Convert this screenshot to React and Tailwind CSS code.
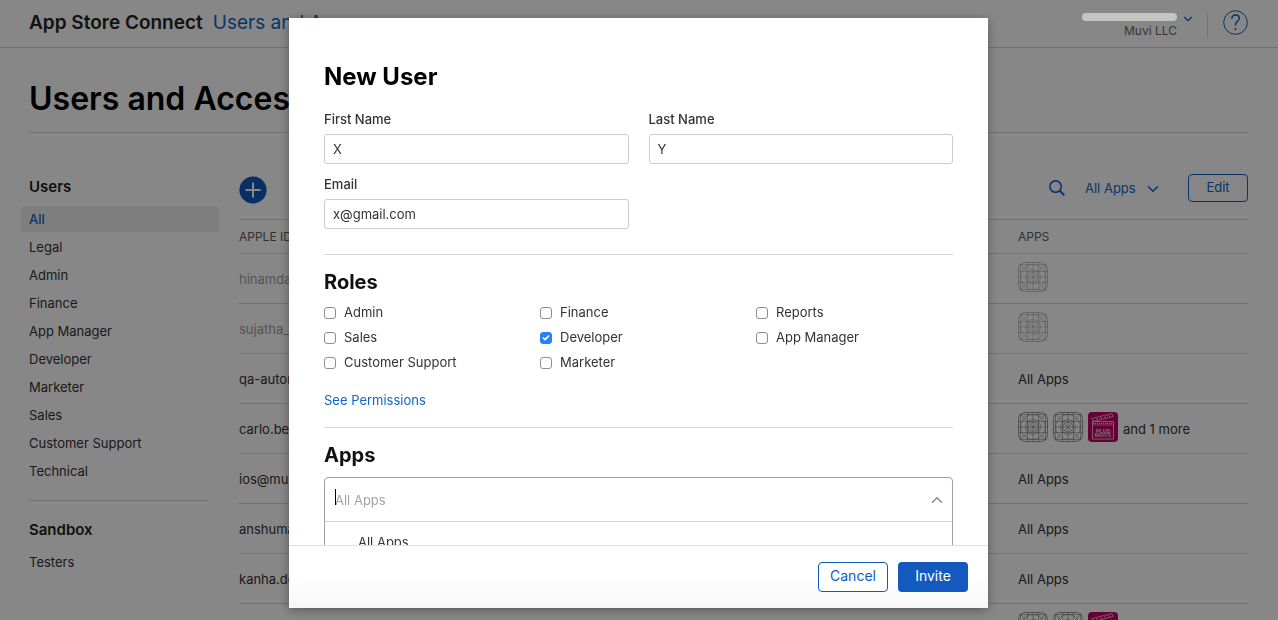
import React from 'react';
import { ChevronDown, ChevronUp, Check } from 'lucide-react';

const sidebarRoles = ['All', 'Legal', 'Admin', 'Finance', 'App Manager', 'Developer', 'Marketer', 'Sales', 'Customer Support', 'Technical'];

const users = [
    { id: 'hinamda', pending: true, icons: ['grid'] },
    { id: 'sujatha_4', pending: true, icons: ['grid'] },
    { id: 'qa-autom', apps: 'All Apps' },
    { id: 'carlo.bel', icons: ['grid', 'grid', 'plus'], apps: 'and 1 more' },
    { id: 'ios@muv', apps: 'All Apps' },
    { id: 'anshuma', apps: 'All Apps' },
    { id: 'kanha.de', apps: 'All Apps' },
    { id: '', icons: ['grid', 'grid', 'plus'] },
];

const roles = [
    { name: 'Admin' },
    { name: 'Finance' },
    { name: 'Reports' },
    { name: 'Sales' },
    { name: 'Developer', checked: true },
    { name: 'App Manager' },
    { name: 'Customer Support' },
    { name: 'Marketer' },
];

function GridIcon() {
    return (
        <svg width="30" height="30" viewBox="0 0 30 30" fill="none" stroke="#808080" strokeWidth="0.6">
            <rect x="0.5" y="0.5" width="29" height="29" rx="7" strokeWidth="0.8" />
            <path d="M2.5 1.5v27M9.5 0.5v29M15 0.5v29M20.5 0.5v29M27.5 1.5v27" />
            <path d="M1.5 2.5h27M0.5 9.5h29M0.5 15h29M0.5 20.5h29M1.5 27.5h27" />
            <path d="M2.5 2.5l7 7M27.5 2.5l-7 7M2.5 27.5l7-7M27.5 27.5l-7-7M10.500 10.500l9 9M19.500 10.500l-9 9" />
            <circle cx="15" cy="15" r="12.5" />
            <circle cx="15" cy="15" r="7.5" />
            <circle cx="15" cy="15" r="5" />
        </svg>
    );
}

function PlusNightsIcon() {
    return (
        <svg width="30" height="30" viewBox="0 0 30 30" fill="none">
            <rect width="30" height="30" rx="4" fill="#c40067" />
            <path d="M4 6.5L24 1.5L25 4.5L5 9.5z" stroke="#efc3d9" strokeWidth="0.8" />
            <path d="M8 5.8l2 2.2M12 4.8l2 2.2M16 3.8l2 2.2M20 2.8l2 2.2" stroke="#efc3d9" strokeWidth="0.9" />
            <path d="M4.500 9.500h21v17.500h-21z" stroke="#efc3d9" strokeWidth="0.9" />
            <path d="M5 11.500h20" stroke="#efc3d9" strokeWidth="1.600" strokeDasharray="1.2 0.8" />
            <path d="M5 13h20" stroke="#efc3d9" strokeWidth="0.6" />
            <text x="15" y="20.500" textAnchor="middle" fontSize="6" fontWeight="800" fill="#efc3d9" fontFamily="Roboto, sans-serif">PLUS</text>
            <text x="15" y="25" textAnchor="middle" fontSize="4.500" fontWeight="800" fill="#efc3d9" fontFamily="Roboto, sans-serif">NIGHTS</text>
        </svg>
    );
}

function Header() {
    return (
        <header className="h-[48px] shrink-0 border-b border-[#d6d6d6] pl-[29px] pr-[30px] flex items-start justify-between">
            <div className="flex gap-[10px] text-[19px] leading-[46px]">
                <span className="font-semibold text-[#222]">App Store Connect</span>
                <a href="#users" className="text-[#1264c8]">Users and Access</a>
            </div>
            <div className="flex items-start pt-[10px]">
                <div className="flex flex-col items-end">
                    {/* account name is masked */}
                    <div className="relative z-20 mt-[3px] w-[95px] h-[8px] rounded-full bg-[#c4c4c4]"></div>
                    <span className="mt-[2px] text-xs leading-4 text-[#666]">Muvi LLC</span>
                </div>
                <button aria-label="Account menu" className="ml-[4px] mt-[2px] text-[#1264c8]">
                    <ChevronDown size={14} />
                </button>
                <div className="ml-[12px] mr-[15px] mt-[4px] w-px h-[24px] bg-[#d6d6d6]"></div>
                <button aria-label="Help" className="text-[#1264c8]">
                    <svg width="25" height="25" viewBox="0 0 25 25" fill="none" stroke="currentColor">
                        <circle cx="12.5" cy="12.5" r="11.8" />
                        <path d="M8.800 8.800c.1-2.500 1.700-3.800 3.800-3.800s3.700 1.300 3.700 3.300c0 1.600-.9 2.500-2 3.300-1.200.9-1.800 1.600-1.800 2.900v1" strokeWidth="1.500" />
                        <circle cx="12.500" cy="19" r="1" fill="currentColor" stroke="none" />
                    </svg>
                </button>
            </div>
        </header>
    );
}

function Sidebar() {
    return (
        <aside className="w-[198px] shrink-0 pt-[3px] text-[13px] text-[#333]">
            <h2 className="pl-[8px] text-[15px] leading-5 font-semibold text-[#1d1d1d]">Users</h2>
            <nav className="mt-[9px] flex flex-col gap-[2px]">
                {sidebarRoles.map((role) => (
                    <a
                        key={role}
                        href="#role"
                        className={role === 'All' ? 'h-[26px] pl-[8px] leading-[26px] rounded bg-[#efefef] text-[#1264c8] font-medium' : 'h-[26px] pl-[8px] leading-[26px]'}
                    >
                        {role}
                    </a>
                ))}
            </nav>
            <hr className="mt-[16px] ml-[8px] mr-[10px] border-[#d6d6d6]" />
            <h2 className="mt-[19px] pl-[8px] text-[15px] leading-5 font-semibold text-[#1d1d1d]">Sandbox</h2>
            <nav className="mt-[9px]">
                <a href="#testers" className="block pl-[8px] leading-[26px]">Testers</a>
            </nav>
        </aside>
    );
}

function UserTable() {
    return (
        <section className="flex-1 min-w-0">
            <div className="h-[45px] flex items-start justify-between">
                <button aria-label="Add user" className="mt-[2px] text-[#145abe]">
                    <svg width="28" height="28" viewBox="0 0 28 28">
                        <circle cx="14" cy="14" r="13.6" fill="currentColor" />
                        <path d="M14 6.5v15M6.5 14h15" stroke="#fff" strokeWidth="2" />
                    </svg>
                </button>
                <div className="flex items-center h-[28px] text-[13px] text-[#1264c8]">
                    <button aria-label="Search">
                        <svg width="16" height="16" viewBox="0 0 16 16" fill="none" stroke="currentColor" strokeWidth="1.6">
                            <circle cx="6.6" cy="6.6" r="5.7" />
                            <path d="M10.8 10.8l4.5 4.5" strokeWidth="2" />
                        </svg>
                    </button>
                    <div className="relative ml-[20px]">
                        <select aria-label="Filter by app" className="appearance-none w-[77px] h-[28px] leading-5 bg-transparent">
                            <option>All Apps</option>
                        </select>
                        <ChevronDown size={18} className="absolute right-0 top-[6px] pointer-events-none" strokeWidth={2} />
                    </div>
                    <button className="ml-[26px] w-[60px] h-[28px] pb-[2px] rounded border border-[#1264c8] leading-5">Edit</button>
                </div>
            </div>
            <table className="w-full table-fixed text-[13px] text-left text-[#333]">
                <thead>
                    <tr className="h-[34px] border-y border-[#d6d6d6] text-xs text-[#5c5c5c]">
                        <th className="font-normal">APPLE ID</th>
                        <th className="w-[230px] font-normal">APPS</th>
                    </tr>
                </thead>
                <tbody>
                    {users.map((user, i) => (
                        <tr key={i} className="h-[50px] border-b border-[#d6d6d6]">
                            <td className={user.pending ? 'pt-[2px] text-[#a0a0a0]' : 'pt-[2px]'}>{user.id}</td>
                            <td className="pt-[2px]">
                                <div className="flex items-center gap-[5px]">
                                    {user.icons && (
                                        <div className={user.pending ? 'flex gap-[5px] pb-[5px] opacity-60' : 'flex gap-[5px] pb-[5px]'}>
                                            {user.icons.map((icon, n) => (icon === 'grid' ? <GridIcon key={n} /> : <PlusNightsIcon key={n} />))}
                                        </div>
                                    )}
                                    {user.apps}
                                </div>
                            </td>
                        </tr>
                    ))}
                </tbody>
            </table>
        </section>
    );
}

function TextField({ id, label, value }) {
    return (
        <div>
            <label htmlFor={id} className="block leading-5 font-medium">{label}</label>
            <input id={id} type="text" defaultValue={value} className="mt-[5px] w-full h-[30px] px-[8px] rounded-[3px] border border-[#ccc]" />
        </div>
    );
}

function RoleCheckbox({ name, checked }) {
    return (
        <label className="flex items-center h-6 gap-2">
            <span className="relative flex">
                <input
                    type="checkbox"
                    defaultChecked={checked}
                    className="peer appearance-none w-3 h-3 rounded-[3px] border border-[#8f8f8f] bg-white checked:border-[#2680fb] checked:bg-[#2680fb]"
                />
                <Check size={8} strokeWidth={5} className="absolute left-[2px] top-[2px] text-white hidden peer-checked:block pointer-events-none" />
            </span>
            {name}
        </label>
    );
}

function NewUserDialog() {
    return (
        <div role="dialog" aria-labelledby="dialog-title" className="w-[699px] max-w-full flex flex-col bg-white text-[13px] text-[#333] shadow-[0_2px_10px_rgba(0,0,0,0.35)]">
            <div className="flex-1 min-h-0 overflow-hidden px-[35px] pt-[44px]">
                <h2 id="dialog-title" className="text-2xl leading-[30px] font-bold text-black">New User</h2>
                <div className="mt-[17px] grid grid-cols-2 gap-x-5 gap-y-[10px]">
                    <TextField id="first-name" label="First Name" value="X" />
                    <TextField id="last-name" label="Last Name" value="Y" />
                    <TextField id="email" label="Email" value="x@gmail.com" />
                </div>

                <div className="mt-[25px] border-t border-[#d6d6d6] pt-[15px]">
                    <h3 className="text-xl leading-6 font-bold text-[#111]">Roles</h3>
                    <div className="mt-[7px] grid grid-cols-3 gap-x-[19px] gap-y-px">
                        {roles.map((role) => (
                            <RoleCheckbox key={role.name} {...role} />
                        ))}
                    </div>
                    <a href="#permissions" className="mt-[15px] block leading-5 text-[#1264c8]">See Permissions</a>
                </div>

                <div className="mt-[17px] border-t border-[#d6d6d6] pt-[15px]">
                    <h3 className="text-xl leading-6 font-bold text-[#111]">Apps</h3>
                    <div className="mt-[10px] rounded border border-[#a0a0a0]">
                        <div className="relative flex items-center border-b border-[#d6d6d6] pr-[6px]">
                            <input type="text" aria-label="Apps" placeholder="All Apps" className="flex-1 h-[43px] pl-[10px] outline-none placeholder:text-[#a3a3a3]" />
                            <span className="absolute left-[10px] top-[11px] w-px h-4 bg-black"></span>
                            <ChevronUp size={18} className="text-[#8a8a8a]" />
                        </div>
                        <div className="pl-[33px] leading-10">All Apps</div>
                    </div>
                </div>
            </div>
            <div className="flex justify-end gap-[10px] border-t border-[#e0e0e0] py-[16px] pr-[20px] text-sm leading-5 bg-linear-to-b from-white from-50% to-[#f7f7f7]">
                <button className="w-[70px] h-[30px] pb-[2px] rounded border border-[#145abe] bg-white text-[#145abe]">Cancel</button>
                <button className="w-[70px] h-[30px] pb-[2px] rounded bg-[#145abe] text-white">Invite</button>
            </div>
        </div>
    );
}

export default function App() {
    return (
        <div className="h-screen overflow-hidden flex flex-col bg-white font-['Inter',sans-serif]">
            <Header />
            <main>
                <h1 className="mt-[31px] ml-[29px] mr-[30px] pb-[13px] border-b border-[#d6d6d6] text-[32px] leading-10 font-semibold text-black">
                    Users and Access
                </h1>
                <div className="mt-[41px] pl-[21px] pr-[30px] flex gap-5">
                    <Sidebar />
                    <UserTable />
                </div>
            </main>
            <div className="fixed inset-0 z-10 flex justify-center pt-[18px] pb-[12px] pr-px bg-black/47">
                <NewUserDialog />
            </div>
        </div>
    );
}
